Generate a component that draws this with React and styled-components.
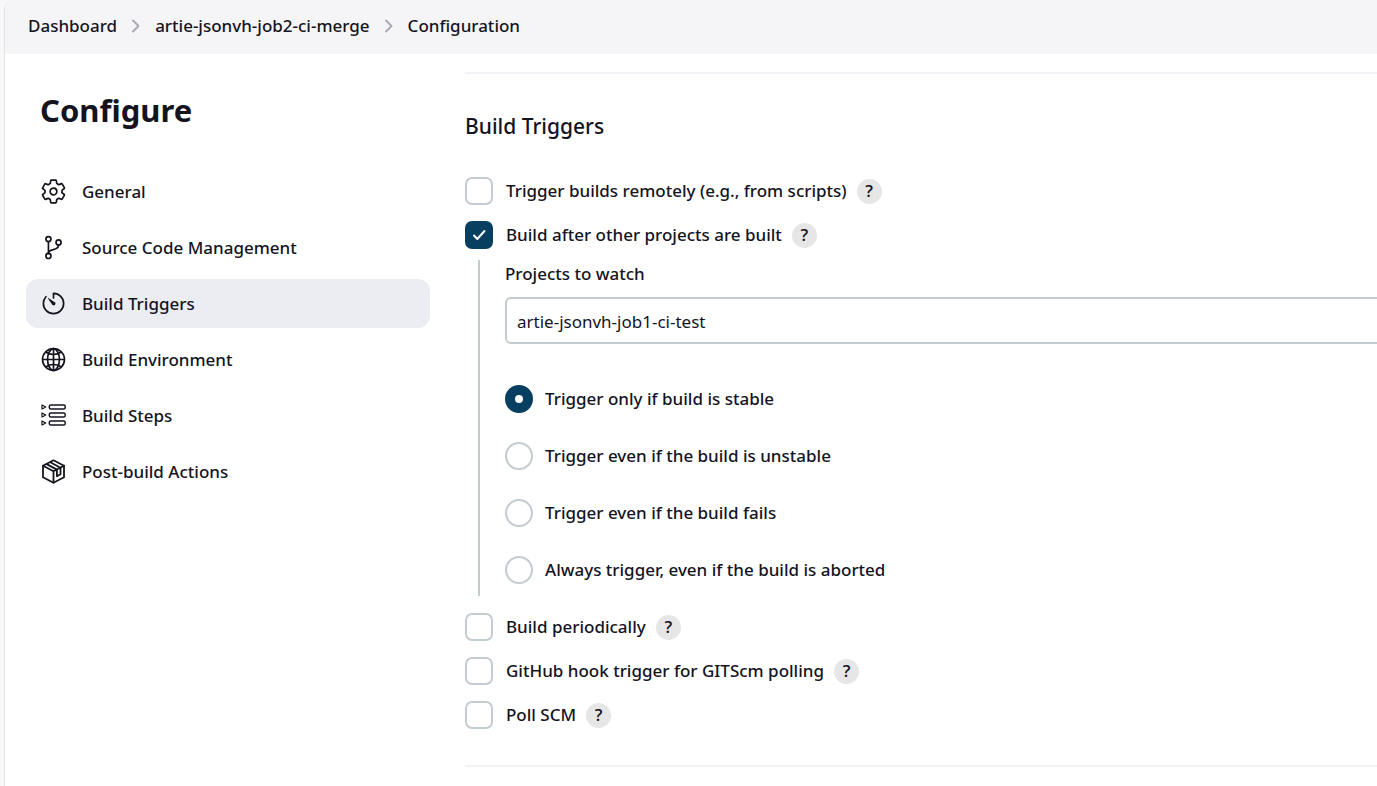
import React from "react";
import styled, { createGlobalStyle } from "styled-components";
import {
  IoSettingsOutline,
  IoGitBranchOutline,
  IoTimerOutline,
  IoGlobeOutline,
} from "react-icons/io5";

const ink = "#14141f";
const line = "#c3ccd1";
const accent = "#073f61";

const GlobalStyle = createGlobalStyle`
  *, *::before, *::after { box-sizing: border-box; }
  body {
    margin: 0;
    background: #f8f8f8;
    color: ${ink};
    font: 500 17px/24px "Noto Sans", "Open Sans", sans-serif;
  }
`;

const Page = styled.div`
  min-height: 100vh;
  display: flex;
  flex-direction: column;
  margin-left: 4px;
  border-left: 1px solid #e2e2e4;
  border-top-left-radius: 10px;
  background: #fff;
  overflow: hidden;
`;

const Breadcrumbs = styled.nav`
  background: #f5f5f8;
  padding: 14px 23px 16px;

  ol {
    display: flex;
    align-items: center;
    gap: 14px;
    margin: 0;
    padding: 0;
    list-style: none;
  }
  li {
    display: flex;
    align-items: center;
    gap: 14px;
  }
  a {
    color: inherit;
    text-decoration: none;
  }
`;

const Columns = styled.div`
  flex: 1;
  display: flex;
  align-items: flex-start;
  gap: 35px;
  padding: 18px 0 0 21px;
`;

const Sidebar = styled.aside`
  flex: 0 0 404px;
`;

const PageTitle = styled.h1`
  margin: 0;
  padding: 18px 14px 0;
  font-size: 31px;
  line-height: 40px;
  font-weight: 700;
`;

const Nav = styled.nav`
  display: flex;
  flex-direction: column;
  gap: 7px;
  margin-top: 37px;
`;

const NavItem = styled.a`
  display: flex;
  align-items: center;
  gap: 15px;
  height: 49px;
  padding: 0 14px;
  border-radius: 12px;
  color: inherit;
  text-decoration: none;
  background: ${(p) => (p.$active ? "#ecedf3" : "transparent")};

  svg {
    width: 27px;
    height: 27px;
    flex: none;
  }
`;

const Main = styled.main`
  flex: 1;
  min-width: 0;
`;

const Divider = styled.hr`
  height: 2px;
  margin: 0;
  border: 0;
  background: #f2f2f7;
`;

const SectionTitle = styled.h2`
  margin: 38px 0 37px;
  font-size: 21px;
  line-height: 28px;
  font-weight: 500;
`;

const OptionList = styled.div`
  display: flex;
  flex-direction: column;
  gap: 16px;
  margin-bottom: 36px;
`;

const OptionRow = styled.div`
  display: flex;
  align-items: center;
  gap: 10px;
  height: 28px;
`;

const Choice = styled.label`
  display: flex;
  align-items: center;
  gap: ${(p) => p.$gap}px;
`;

const Control = styled.input`
  appearance: none;
  flex: none;
  width: 28px;
  height: 28px;
  margin: 0;
  border: 2px solid ${line};
  background: #fff;
`;

const Checkbox = styled(Control)`
  border-radius: 7px;

  &:checked {
    border-color: ${accent};
    background: ${accent}
      url("data:image/svg+xml,%3Csvg xmlns='http://www.w3.org/2000/svg' viewBox='0 0 24 24' fill='none' stroke='white' stroke-width='2' stroke-linecap='round' stroke-linejoin='round'%3E%3Cpath d='M7 12.5l3.3 3.5L17.5 8'/%3E%3C/svg%3E")
      center / 24px no-repeat;
  }
`;

const Radio = styled(Control)`
  border-radius: 50%;

  &:checked {
    border: 10px solid ${accent};
  }
`;

const Help = styled.button`
  width: 25px;
  height: 25px;
  padding: 0;
  border: 0;
  border-radius: 50%;
  background: #e6e6e6;
  color: ${ink};
  font: 600 17px/24px "Open Sans", sans-serif;
`;

const Nested = styled.div`
  margin: -5px 0 1px 13px;
  padding: 0 0 12px 25px;
  border-left: 2px solid ${line};
`;

const FieldLabel = styled.label`
  display: block;
  padding-top: 2px;
`;

const TextField = styled.input`
  display: block;
  width: 100%;
  height: 47px;
  margin: 11px 0 41px;
  padding: 2px 10px 0;
  border: 2px solid ${line};
  border-right: 0;
  border-radius: 6px 0 0 6px;
  color: ${ink};
  font: 400 17px/24px "Noto Sans", sans-serif;
`;

const RadioList = styled.div`
  display: flex;
  flex-direction: column;
  gap: 29px;
`;

function Chevron() {
  return (
    <svg width="10" height="14" viewBox="0 0 10 14" fill="none" stroke="#a9a9bb" strokeWidth="2" strokeLinecap="round" strokeLinejoin="round" aria-hidden="true">
      <path d="M2 1.5 7.5 7 2 12.5" />
    </svg>
  );
}

function StepsIcon() {
  return (
    <svg viewBox="0 0 27 27" fill="none" stroke="currentColor" strokeWidth="1.5" strokeLinejoin="round" aria-hidden="true">
      {[5, 13, 21].map((y) => (
        <g key={y}>
          <path strokeWidth="1.2" d={`M2 ${y - 2}v4l3.800-2z`} />
          <rect x="9.300" y={y - 2} width="15.900" height="4" rx="1.600" />
        </g>
      ))}
    </svg>
  );
}

function PackageIcon() {
  return (
    <svg viewBox="0 0 27 27" fill="none" stroke="currentColor" strokeWidth="1.8" strokeLinecap="round" strokeLinejoin="round" aria-hidden="true">
      <path d="M13.500 2.300 24 7.700v11.600l-10.500 5.400L3 19.300V7.700z" />
      <path d="M3 7.700l10.500 5.500L24 7.700M13.500 13.200V24.500" />
      <path d="M10.300 4.200l10.200 5.500v6.600l-3.600 1.900v-6.600L6.700 6.100" />
    </svg>
  );
}

const sections = [
  ["General", IoSettingsOutline],
  ["Source Code Management", IoGitBranchOutline],
  ["Build Triggers", IoTimerOutline],
  ["Build Environment", IoGlobeOutline],
  ["Build Steps", StepsIcon],
  ["Post-build Actions", PackageIcon],
];

const conditions = [
  "Trigger only if build is stable",
  "Trigger even if the build is unstable",
  "Trigger even if the build fails",
  "Always trigger, even if the build is aborted",
];

function Option({ label, checked }) {
  return (
    <OptionRow>
      <Choice $gap={13}>
        <Checkbox type="checkbox" defaultChecked={checked} />
        {label}
      </Choice>
      <Help type="button" aria-label={`Help for ${label}`}>?</Help>
    </OptionRow>
  );
}

export default function App() {
  return (
    <Page>
      <GlobalStyle />
      <Breadcrumbs aria-label="Breadcrumb">
        <ol>
          <li><a href="#dashboard">Dashboard</a><Chevron /></li>
          <li><a href="#job">artie-jsonvh-job2-ci-merge</a><Chevron /></li>
          <li><a href="#configuration">Configuration</a></li>
        </ol>
      </Breadcrumbs>
      <Columns>
        <Sidebar>
          <PageTitle>Configure</PageTitle>
          <Nav aria-label="Sections">
            {sections.map(([name, Icon]) => (
              <NavItem key={name} href="#section" $active={name === "Build Triggers"}>
                <Icon />
                {name}
              </NavItem>
            ))}
          </Nav>
        </Sidebar>
        <Main>
          <Divider />
          <SectionTitle>Build Triggers</SectionTitle>
          <OptionList>
            <Option label="Trigger builds remotely (e.g., from scripts)" />
            <Option label="Build after other projects are built" checked />
            <Nested>
              <FieldLabel htmlFor="watch">Projects to watch</FieldLabel>
              <TextField id="watch" type="text" defaultValue="artie-jsonvh-job1-ci-test" />
              <RadioList>
                {conditions.map((text, i) => (
                  <Choice key={text} $gap={12}>
                    <Radio type="radio" name="condition" defaultChecked={i === 0} />
                    {text}
                  </Choice>
                ))}
              </RadioList>
            </Nested>
            <Option label="Build periodically" />
            <Option label="GitHub hook trigger for GITScm polling" />
            <Option label="Poll SCM" />
          </OptionList>
          <Divider />
        </Main>
      </Columns>
    </Page>
  );
}
